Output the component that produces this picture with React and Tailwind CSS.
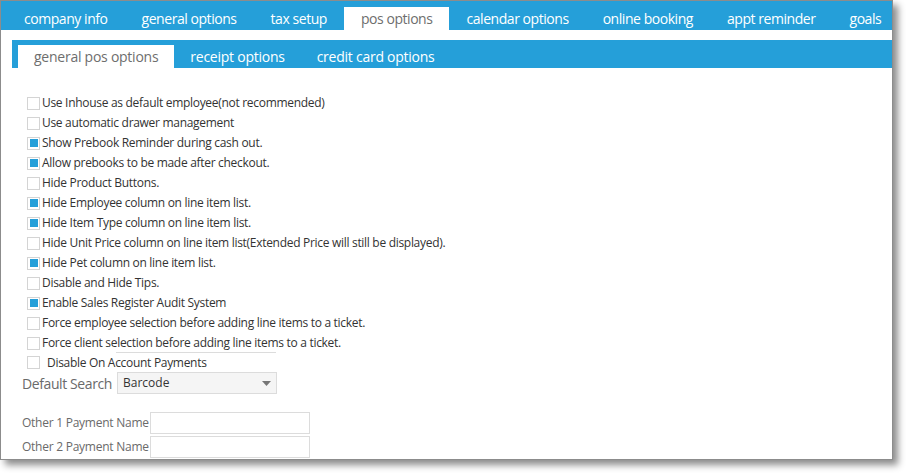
import { useState } from 'react';

const mainTabs = [
  'company info',
  'general options',
  'tax setup',
  'pos options',
  'calendar options',
  'online booking',
  'appt reminder',
  'goals',
];

const subTabs = ['general pos options', 'receipt options', 'credit card options'];

const options = [
  { label: 'Use Inhouse as default employee(not recommended)', checked: false },
  { label: 'Use automatic drawer management', checked: false },
  { label: 'Show Prebook Reminder during cash out.', checked: true },
  { label: 'Allow prebooks to be made after checkout.', checked: true },
  { label: 'Hide Product Buttons.', checked: false },
  { label: 'Hide Employee column on line item list.', checked: true },
  { label: 'Hide Item Type column on line item list.', checked: true },
  { label: 'Hide Unit Price column on line item list(Extended Price will still be displayed).', checked: false },
  { label: 'Hide Pet column on line item list.', checked: true },
  { label: 'Disable and Hide Tips.', checked: false },
  { label: 'Enable Sales Register Audit System', checked: true },
  { label: 'Force employee selection before adding line items to a ticket.', checked: false },
  { label: 'Force client selection before adding line items to a ticket.', checked: false },
];

function Checkbox({ checked }) {
  return (
    <span className="w-[13px] h-[13px] border border-[#d4d4d4] bg-white flex items-center justify-center shrink-0">
      {checked && <span className="w-[8px] h-[8px] bg-[#259fd9]" />}
    </span>
  );
}

export default function App() {
  const [active, setActive] = useState('pos options');
  const [sub, setSub] = useState('general pos options');
  const [checks, setChecks] = useState(options.map((o) => o.checked));

  return (
    <div className="w-[909px] h-[476px] bg-white" style={{ fontFamily: '"Open Sans", "Noto Sans", sans-serif' }}>
      <div className="w-[893px] h-[460px] border border-[#8c8c8c] bg-white shadow-[5px_5px_7px_rgba(0,0,0,0.45)] flex flex-col overflow-hidden">
        {/* top tabs */}
        <div className="h-[29px] bg-[#259fd9] flex items-end pl-[6px]">
          {mainTabs.map((t) => (
            <button
              key={t}
              onClick={() => setActive(t)}
              className={`h-[23px] px-[17px] text-[14px] leading-[23px] whitespace-nowrap tracking-[-0.45px] ${
                active === t ? 'bg-white text-[#6e6e6e]' : 'text-white'
              }`}
            >
              {t}
            </button>
          ))}
        </div>

        {/* sub tabs */}
        <div className="mt-[10px] ml-[11px] h-[28px] bg-[#259fd9] flex items-end pl-[6px]">
          {subTabs.map((t) => (
            <button
              key={t}
              onClick={() => setSub(t)}
              className={`h-[23px] px-[16px] text-[14px] leading-[23px] whitespace-nowrap tracking-[-0.25px] ${
                sub === t ? 'bg-white text-[#6e6e6e]' : 'text-white'
              }`}
            >
              {t}
            </button>
          ))}
        </div>

        {/* options */}
        <div className="mt-[25px] pl-[26px] flex flex-col text-[12px] text-[#333] tracking-[-0.3px]">
          {options.map((o, i) => (
            <label key={o.label} className="h-[20px] flex items-center gap-[2px] cursor-pointer">
              <span
                onClick={() => setChecks(checks.map((c, j) => (j === i ? !c : c)))}
              >
                <Checkbox checked={checks[i]} />
              </span>
              <span className="whitespace-nowrap">{o.label}</span>
            </label>
          ))}
          <div className="ml-[89px] w-[160px] border-t border-[#dcdcdc] -mt-[1px]" />
          <label className="h-[19px] flex items-center gap-[7px]">
            <Checkbox checked={false} />
            <span className="whitespace-nowrap">Disable On Account Payments</span>
          </label>
        </div>

        {/* default search */}
        <div className="pl-[21px] flex items-center gap-[4px]">
          <span className="text-[14px] text-[#6a6a6a] tracking-[-0.4px] w-[91px] whitespace-nowrap">Default Search</span>
          <div className="w-[160px] h-[22px] bg-[#f5f5f5] border border-[#dcdcdc] flex items-center justify-between pl-[5px] pr-[5px] text-[12px] text-[#333]">
            <span>Barcode</span>
            <svg width="9" height="5" viewBox="0 0 9 5">
              <path d="M0 0h9L4.5 5z" fill="#777" />
            </svg>
          </div>
        </div>

        {/* other payment names */}
        <div className="pl-[21px] mt-[18px] flex flex-col gap-[2px] text-[12px] text-[#6a6a6a] tracking-[-0.25px]">
          <div className="flex items-center">
            <span className="w-[128px] whitespace-nowrap">Other 1 Payment Name</span>
            <input className="w-[160px] h-[22px] border border-[#dcdcdc] bg-white outline-none" />
          </div>
          <div className="flex items-center">
            <span className="w-[128px] whitespace-nowrap">Other 2 Payment Name</span>
            <input className="w-[160px] h-[22px] border border-[#dcdcdc] bg-white outline-none" />
          </div>
        </div>
      </div>
    </div>
  );
}
